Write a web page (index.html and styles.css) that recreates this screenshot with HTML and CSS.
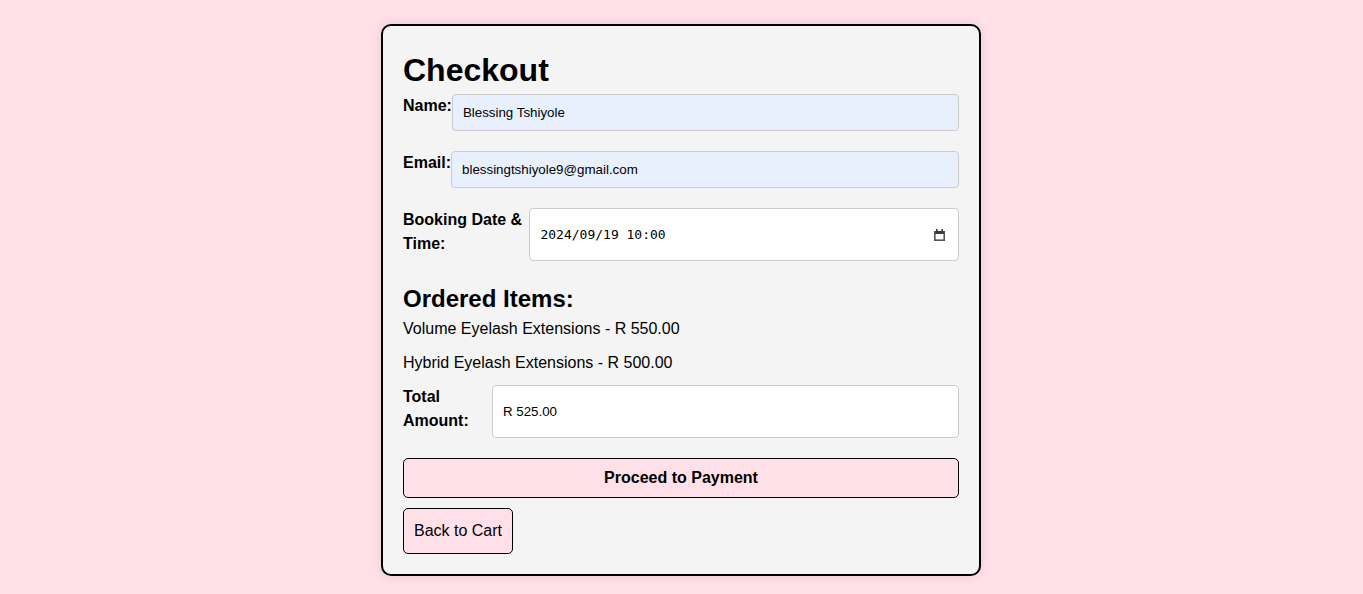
FILE: index.html
```html
<!DOCTYPE html>
<html lang="en">
<head>
<meta charset="utf-8">
<title>Checkout</title>
<link rel="stylesheet" href="styles.css">
</head>
<body>
<div class="checkout">
  <h1 class="title">Checkout</h1>
  <form class="form">
    <div class="form-group">
      <label class="label" for="name">Name:</label>
      <input class="input autofilled" id="name" type="text" value="Blessing Tshiyole">
    </div>
    <div class="form-group">
      <label class="label" for="email">Email:</label>
      <input class="input autofilled" id="email" type="email" value="blessingtshiyole9@gmail.com">
    </div>
    <div class="form-group">
      <label class="label" for="date">Booking Date &amp; Time:</label>
      <div class="date-field">
        <input class="date-input" id="date" type="text" value="2024/09/19 10:00">
        <svg class="cal-icon" width="11" height="12" viewBox="0 0 11 12" aria-hidden="true">
          <rect x="2" y="0" width="1.6" height="2.4" fill="#3a3a3a"/>
          <rect x="7.4" y="0" width="1.6" height="2.4" fill="#3a3a3a"/>
          <rect x="0" y="2" width="11" height="3" fill="#3a3a3a"/>
          <rect x="0" y="2" width="1.6" height="10" fill="#555"/>
          <rect x="9.4" y="2" width="1.6" height="10" fill="#555"/>
          <rect x="0" y="10.4" width="11" height="1.6" fill="#555"/>
        </svg>
      </div>
    </div>

    <h2 class="subtitle">Ordered Items:</h2>
    <p class="item">Volume Eyelash Extensions - R 550.00</p>
    <p class="item">Hybrid Eyelash Extensions - R 500.00</p>

    <div class="form-group">
      <label class="label" for="total">Total Amount:</label>
      <input class="input" id="total" type="text" value="R 525.00" readonly>
    </div>

    <button class="btn-primary" type="button">Proceed to Payment</button>
    <a class="btn-secondary" href="#">Back to Cart</a>
  </form>
</div>
</body>
</html>
```

FILE: styles.css
```css
body {
  margin: 0;
  padding: 0 1px 0 0;
  background: #ffe0e9;
  font-family: "Liberation Sans", Arial, sans-serif;
  font-size: 16px;
  line-height: 1.5;
  color: #000;
}

.checkout {
  box-sizing: border-box;
  width: 600px;
  margin: 24px auto;
  padding: 20px;
  background: #f4f4f4;
  border: 2px solid #000;
  border-radius: 10px;
  box-shadow: 0 0 10px rgba(0, 0, 0, 0.1);
}

.title {
  margin: 0;
  font-size: 32px;
  font-weight: bold;
}

.form {
  margin: 0;
}

.form-group {
  display: flex;
  margin-bottom: 20px;
}

.label {
  font-weight: bold;
  margin-bottom: 5px;
}

.input {
  box-sizing: border-box;
  width: 100%;
  padding: 10px;
  border: 1px solid #ccc;
  border-radius: 4px;
  background: #fff;
  font-family: "Liberation Sans", Arial, sans-serif;
  font-size: 13.33px;
  color: #000;
}

.input.autofilled {
  background: #e8f0fe;
}

.date-field {
  box-sizing: border-box;
  width: 100%;
  display: flex;
  align-items: center;
  padding: 0 13px 0 10px;
  border: 1px solid #ccc;
  border-radius: 4px;
  background: #fff;
}

.date-input {
  flex: 1;
  min-width: 0;
  padding: 0;
  border: 0;
  outline: none;
  background: transparent;
  font-family: "DejaVu Sans Mono", "Liberation Mono", monospace;
  font-size: 13px;
  color: #000;
}

.cal-icon {
  flex: none;
  display: block;
}

.subtitle {
  margin: 20px 0 0;
  font-size: 24px;
  font-weight: bold;
}

.item {
  margin: 0 0 10px;
}

.btn-primary {
  display: block;
  box-sizing: border-box;
  width: 100%;
  margin: 0 0 10px;
  padding: 10px;
  background: #ffe0e9;
  border: 1px solid #000;
  border-radius: 5px;
  font-family: "Liberation Sans", Arial, sans-serif;
  font-size: 16px;
  font-weight: bold;
  color: #000;
}

.btn-secondary {
  display: inline-block;
  padding: 10px;
  background: #ffe0e9;
  border: 1px solid #000;
  border-radius: 5px;
  font-size: 16px;
  color: #000;
  text-decoration: none;
}
```
